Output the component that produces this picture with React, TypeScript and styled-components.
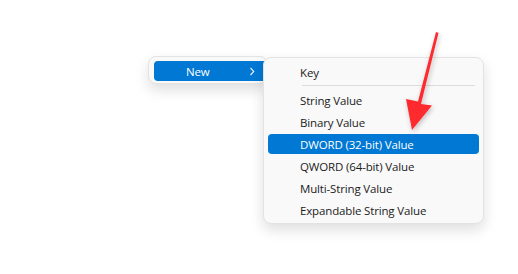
import React from "react";
import styled, { createGlobalStyle } from "styled-components";

const GlobalStyle = createGlobalStyle`
    html, body {
        margin: 0;
        padding: 0;
        background: #ffffff;
    }
    body {
        font-family: "Segoe UI", "Open Sans", "Noto Sans", sans-serif;
        font-size: 11.5px;
        letter-spacing: -0.15px;
        color: #1b1b1b;
    }
`;

const Stage = styled.div`
    position: relative;
    width: 518px;
    height: 274px;
    box-sizing: border-box;
    padding: 56px 0 0 148px;
    display: flex;
    align-items: flex-start;
`;

const Menu = styled.div`
    display: flex;
    flex-direction: column;
    background: #f9f9f9;
    border: 1px solid #e3e3e3;
    border-radius: 8px;
    box-shadow: 0 6px 14px rgba(0, 0, 0, 0.13);
    box-sizing: border-box;
`;

const ParentMenu = styled(Menu)`
    width: 120px;
    padding: 4px 0 2px 5px;
`;

const SubMenu = styled(Menu)`
    width: 221px;
    margin: 1px 0 0 -5px;
    padding: 4px 4px 3px;
    gap: 2px;
    position: relative;
    z-index: 1;
`;

const Item = styled.div<{ $active?: boolean }>`
    display: flex;
    align-items: center;
    justify-content: space-between;
    height: 20px;
    padding: 0 12px 0 32px;
    border-radius: 4px;
    white-space: nowrap;
    background: ${(p) => (p.$active ? "#0078d4" : "transparent")};
    color: ${(p) => (p.$active ? "#ffffff" : "#1b1b1b")};
`;

const Separator = styled.div`
    height: 1px;
    background: #dcdcdc;
    margin: 1px 4px 2px 34px;
`;

const Arrow = styled.svg`
    position: absolute;
    left: 0;
    top: 0;
    pointer-events: none;
    z-index: 2;
`;

const Chevron = () => (
    <svg width="6" height="9" viewBox="0 0 6 9">
        <path d="M1.5 1 L4.8 4.5 L1.5 8" fill="none" stroke="#e8f1fb" strokeWidth="1.1" />
    </svg>
);

const entries = [
    "String Value",
    "Binary Value",
    "DWORD (32-bit) Value",
    "QWORD (64-bit) Value",
    "Multi-String Value",
    "Expandable String Value",
];

const App = () => (
    <>
        <GlobalStyle />
        <Stage>
            <ParentMenu>
                <Item $active>
                    <span>New</span>
                    <Chevron />
                </Item>
            </ParentMenu>
            <SubMenu>
                <Item>Key</Item>
                <Separator />
                {entries.map((label) => (
                    <Item key={label} $active={label.startsWith("DWORD")}>
                        {label}
                    </Item>
                ))}
            </SubMenu>
            <Arrow width="518" height="274" viewBox="0 0 518 274">
                <defs>
                    <filter id="shadow" x="-50%" y="-50%" width="200%" height="200%">
                        <feDropShadow dx="1" dy="2" stdDeviation="2.5" floodColor="#000" floodOpacity="0.25" />
                    </filter>
                </defs>
                <polygon
                    points="436,32 438.5,33 421,104 432,105.5 412,130 406,99 418,101.5"
                    fill="#fd2b2f"
                    filter="url(#shadow)"
                />
            </Arrow>
        </Stage>
    </>
);

export default App;
